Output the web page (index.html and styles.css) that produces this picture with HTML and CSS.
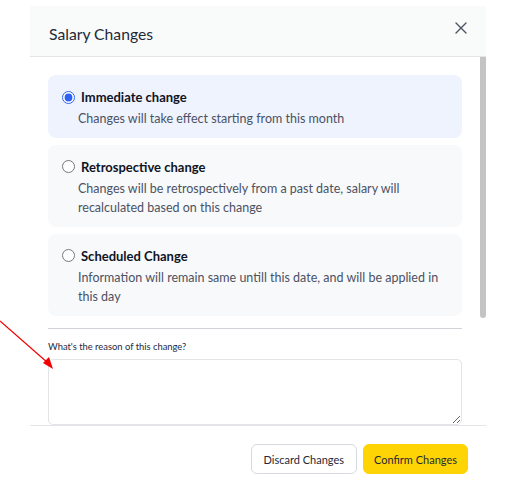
FILE: index.html
```html
<!DOCTYPE html>
<html lang="en">
<head>
<meta charset="utf-8">
<title>Salary Changes</title>
<link rel="stylesheet" href="styles.css">
</head>
<body>
<div class="modal">
  <div class="modal-header">
    <h2 class="modal-title">Salary Changes</h2>
    <button class="close-btn" type="button" aria-label="Close">
      <svg width="12" height="12" viewBox="0 0 12 12"><path d="M1 1L11 11M11 1L1 11" stroke="currentColor" stroke-width="1.4" fill="none" stroke-linecap="round"/></svg>
    </button>
  </div>
  <div class="modal-body">
    <label class="option option-active">
      <span class="option-head"><input type="radio" name="change" checked><span class="option-title">Immediate change</span></span>
      <span class="option-desc">Changes will take effect starting from this month</span>
    </label>
    <label class="option">
      <span class="option-head"><input type="radio" name="change"><span class="option-title">Retrospective change</span></span>
      <span class="option-desc">Changes will be retrospectively from a past date, salary will recalculated based on this change</span>
    </label>
    <label class="option">
      <span class="option-head"><input type="radio" name="change"><span class="option-title">Scheduled Change</span></span>
      <span class="option-desc">Information will remain same untill this date, and will be applied in this day</span>
    </label>
    <hr class="divider">
    <label class="field-label" for="reason">What's the reason of this change?</label>
    <textarea id="reason" class="reason"></textarea>
    <div class="body-end"></div>
  </div>
  <div class="scroll-thumb"></div>
  <div class="modal-footer">
    <button class="btn btn-secondary" type="button">Discard Changes</button>
    <button class="btn btn-primary" type="button">Confirm Changes</button>
  </div>
</div>
<svg class="annotation" width="70" height="380" viewBox="0 0 70 380">
  <line x1="0" y1="321" x2="48" y2="363" stroke="#f20000" stroke-width="1.2"/>
  <polygon points="53,369 43,363 49,357" fill="#f20000"/>
</svg>
</body>
</html>
```

FILE: styles.css
```css
* { box-sizing: border-box; }
html, body { margin: 0; padding: 0; background: #ffffff; }
body {
  font-family: Lato, "Noto Sans", sans-serif;
  color: #1f2937;
  padding: 6px 0 0 30px;
  height: 487px;
  overflow: hidden;
  position: relative;
}
.modal {
  position: relative;
  width: 456px;
  height: 481px;
  background: #ffffff;
  display: flex;
  flex-direction: column;
}
.modal-header {
  height: 51px;
  flex: none;
  background: #f9fafa;
  border-bottom: 1px solid #e3e5e8;
  display: flex;
  align-items: flex-start;
  justify-content: space-between;
  padding: 17px 18px 0 19px;
}
.modal-title {
  margin: 0;
  font-size: 15.7px;
  line-height: 22px;
  font-weight: 400;
  color: #1f2937;
}
.close-btn {
  border: 0;
  background: none;
  padding: 0;
  margin: -2px 0 0 0;
  width: 14px;
  height: 14px;
  color: #4b5563;
  display: flex;
  align-items: center;
  justify-content: center;
}
.modal-body {
  flex: 1;
  overflow: hidden;
  padding: 18px 24px 0 18px;
}
.scroll-thumb {
  position: absolute;
  right: 0;
  top: 51px;
  width: 6px;
  height: 261px;
  background: #c4c4c4;
  border-radius: 0 0 3px 3px;
}
.option {
  display: flex;
  flex-direction: column;
  background: #f8f9fb;
  border-radius: 8px;
  padding: 12px 16px 9px 14px;
  margin-bottom: 7px;
  cursor: pointer;
}
.option-active { background: #eff3fe; }
.option-head {
  display: flex;
  align-items: center;
  height: 20px;
}
.option-head input {
  margin: 0 6px 0 0;
  width: 13px;
  height: 13px;
  accent-color: #2f62f0;
}
.option-title {
  font-size: 13px;
  font-weight: 700;
  color: #0f1424;
}
.option-desc {
  margin-top: 2px;
  padding-left: 16px;
  font-size: 12.5px;
  line-height: 19.5px;
  color: #4b5263;
}
.divider {
  border: 0;
  border-top: 1px solid #d0d3d8;
  margin: 12px 0 0 0;
}
.field-label {
  display: block;
  font-size: 9.4px;
  line-height: 14px;
  color: #1e2a44;
  margin: 11px 0 5px 0;
}
.reason {
  display: block;
  width: 100%;
  height: 66px;
  border: 1px solid #e2e4e8;
  border-radius: 5px;
  resize: vertical;
  font-family: inherit;
  margin: 0;
}
.body-end { height: 150px; }
.modal-footer {
  flex: none;
  border-top: 1px solid #e3e5e8;
  display: flex;
  justify-content: flex-end;
  gap: 6px;
  padding: 18px 18px 0 0;
  height: 62px;
}
.btn {
  height: 30px;
  border-radius: 6px;
  font-family: inherit;
  font-size: 11px;
  padding: 0 11px;
  cursor: pointer;
}
.btn-secondary {
  background: #ffffff;
  border: 1px solid #d6d9de;
  color: #1f2937;
  padding: 0 12px;
}
.btn-primary {
  background: #ffd404;
  border: 1px solid #ffd404;
  color: #1f2937;
  padding: 0 10px;
}
.annotation {
  position: absolute;
  left: 0;
  top: 0;
  pointer-events: none;
}
```
